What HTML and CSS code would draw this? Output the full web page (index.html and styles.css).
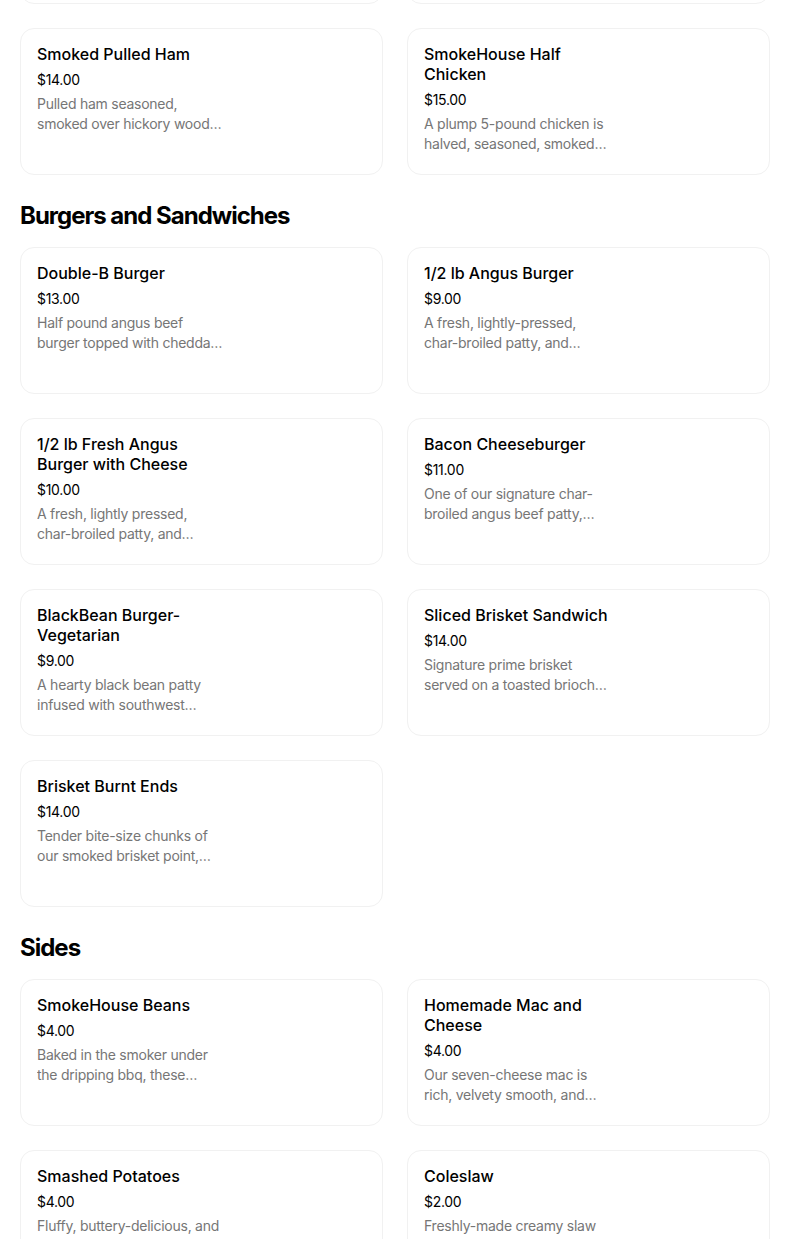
FILE: index.html
```html
<!DOCTYPE html>
<html lang="en">
  <head>
    <meta charset="utf-8" />
    <meta name="viewport" content="width=device-width, initial-scale=1.0" />
    <title>SmokeHouse Menu</title>
    <link rel="stylesheet" href="styles.css">
  </head>
  <body>
    <main class="menu">
      <!-- previous row, scrolled out of view: only the bottom edges show -->
      <section class="section">
        <div class="grid">
          <div class="card"></div>
          <div class="card"></div>
          <div class="card">
            <div class="info">
              <h3 class="name">Smoked Pulled Ham</h3>
              <div class="price">$14.00</div>
              <p class="desc">Pulled ham seasoned, smoked over hickory wood and finished with our glaze.</p>
            </div>
          </div>
          <div class="card">
            <div class="info">
              <h3 class="name">SmokeHouse Half Chicken</h3>
              <div class="price">$15.00</div>
              <p class="desc">A plump 5-pound chicken is halved, seasoned, smoked and grilled.</p>
            </div>
          </div>
        </div>
      </section>

      <section class="section">
        <h2 class="section-title">Burgers and Sandwiches</h2>
        <div class="grid">
          <div class="card">
            <div class="info">
              <h3 class="name">Double-B Burger</h3>
              <div class="price">$13.00</div>
              <p class="desc">Half pound angus beef burger topped with cheddar, brisket and bacon.</p>
            </div>
          </div>
          <div class="card">
            <div class="info">
              <h3 class="name">1/2 lb Angus Burger</h3>
              <div class="price">$9.00</div>
              <p class="desc">A fresh, lightly-pressed, char-broiled patty, and lettuce, tomato and onion.</p>
            </div>
          </div>
          <div class="card">
            <div class="info">
              <h3 class="name">1/2 lb Fresh Angus Burger with Cheese</h3>
              <div class="price">$10.00</div>
              <p class="desc">A fresh, lightly pressed, char-broiled patty, and melted cheese.</p>
            </div>
          </div>
          <div class="card">
            <div class="info">
              <h3 class="name">Bacon Cheeseburger</h3>
              <div class="price">$11.00</div>
              <p class="desc">One of our signature char-broiled angus beef patty, topped with bacon.</p>
            </div>
          </div>
          <div class="card">
            <div class="info">
              <h3 class="name">BlackBean Burger-Vegetarian</h3>
              <div class="price">$9.00</div>
              <p class="desc">A hearty black bean patty infused with southwest spices.</p>
            </div>
          </div>
          <div class="card">
            <div class="info">
              <h3 class="name">Sliced Brisket Sandwich</h3>
              <div class="price">$14.00</div>
              <p class="desc">Signature prime brisket served on a toasted brioche bun.</p>
            </div>
          </div>
          <div class="card">
            <div class="info">
              <h3 class="name">Brisket Burnt Ends</h3>
              <div class="price">$14.00</div>
              <p class="desc">Tender bite-size chunks of our smoked brisket point, tossed in sauce.</p>
            </div>
          </div>
        </div>
      </section>

      <section class="section">
        <h2 class="section-title">Sides</h2>
        <div class="grid">
          <div class="card">
            <div class="info">
              <h3 class="name">SmokeHouse Beans</h3>
              <div class="price">$4.00</div>
              <p class="desc">Baked in the smoker under the dripping bbq, these beans are loaded.</p>
            </div>
          </div>
          <div class="card">
            <div class="info">
              <h3 class="name">Homemade Mac and Cheese</h3>
              <div class="price">$4.00</div>
              <p class="desc">Our seven-cheese mac is rich, velvety smooth, and baked golden.</p>
            </div>
          </div>
          <div class="card">
            <div class="info">
              <h3 class="name">Smashed Potatoes</h3>
              <div class="price">$4.00</div>
              <p class="desc">Fluffy, buttery-delicious, and smashed with skins on.</p>
            </div>
          </div>
          <div class="card">
            <div class="info">
              <h3 class="name">Coleslaw</h3>
              <div class="price">$2.00</div>
              <p class="desc">Freshly-made creamy slaw tossed with cabbage and carrots.</p>
            </div>
          </div>
        </div>
      </section>
    </main>
  </body>
</html>
```
FILE: styles.css
```css
html,
body {
  margin: 0;
  padding: 0;
  background-color: #fff;
  color: #000;
  font-family: Inter, "Noto Sans", sans-serif;
}

.menu {
  width: 750px;
  padding: 0 20px;
  margin-top: -143px;
}

.section-title {
  margin: 27px 0 17px;
  font-size: 24px;
  line-height: 28px;
  font-weight: 700;
  letter-spacing: -1px;
}

.grid {
  display: grid;
  grid-template-columns: 1fr 1fr;
  gap: 24px;
}

.card {
  box-sizing: border-box;
  height: 147px;
  padding: 15px 16px;
  border: 1px solid #f1f1f1;
  border-radius: 14px;
  background-color: #fff;
  overflow: hidden;
}

.info {
  width: 186px;
}

.name {
  margin: 0 0 6px;
  font-size: 16px;
  line-height: 20px;
  font-weight: 500;
}

.price {
  margin: 0 0 4px;
  font-size: 14px;
  line-height: 20px;
  letter-spacing: -0.3px;
}

.desc {
  margin: 0;
  font-size: 14px;
  line-height: 20px;
  letter-spacing: -0.25px;
  color: #767676;
  display: -webkit-box;
  -webkit-line-clamp: 2;
  -webkit-box-orient: vertical;
  overflow: hidden;
}
```
